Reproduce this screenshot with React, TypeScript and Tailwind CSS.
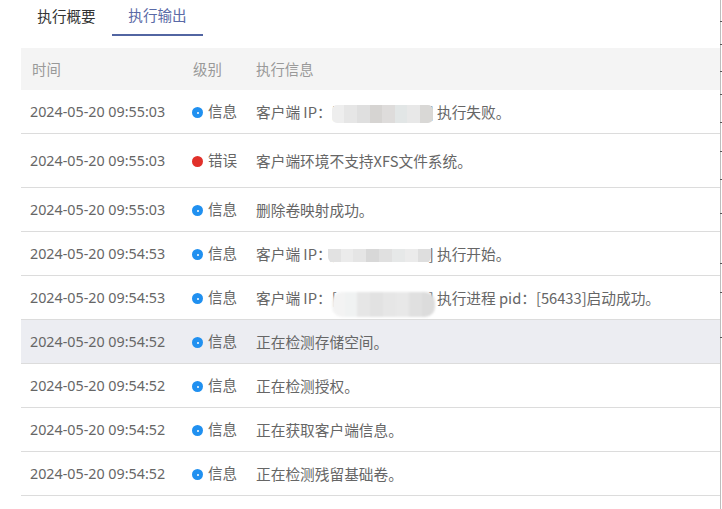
const font = "[font-family:'Noto_Sans_CJK_SC','Noto_Sans',sans-serif]";

const mosaic: Record<string, string[]> = {
  a: ["#eeeeee", "#e6e6e6", "#dfdfdf", "#d6d4d2", "#dedcdb", "#e2e6e6", "#e8e8e8", "#d9d8d6"],
  b: ["#e2e2e2", "#ebebeb", "#e5e5e5", "#d8d8d8", "#e0e0e0", "#e6e8e8", "#ebebeb", "#dedede"],
  c: ["#f3f3f3", "#f0f2f2", "#e6e6e6", "#e2e2e2", "#e6e6e6", "#e8e8e8", "#e0e0e0", "#dcdcdc"],
};

function Masked({ kind }: { kind: "a" | "b" | "c" }) {
  return (
    <span className="relative inline-block w-[102px] whitespace-nowrap text-right">
      <span className="absolute left-0">[</span>]
      {kind === "a" && (
        <span className="absolute left-0 top-[3px] flex h-[18px] w-[101px] overflow-hidden rounded-[5px] blur-[0.6px]">
          {mosaic.a.map((c, i) => (
            <span key={i} className="h-full flex-1" style={{ backgroundColor: c }} />
          ))}
        </span>
      )}
      {kind === "b" && (
        <span className="absolute -left-[4px] -top-[1px] h-[20px] w-[103px] overflow-hidden rounded-[6px] bg-white blur-[0.6px]">
          <span className="mt-[6px] flex h-[13px]">
            {mosaic.b.map((c, i) => (
              <span key={i} className="h-full flex-1" style={{ backgroundColor: c }} />
            ))}
          </span>
        </span>
      )}
      {kind === "c" && (
        <span className="absolute left-0 top-[4px] flex h-[25px] w-[103px] overflow-hidden rounded-[10px] blur-[0.8px]">
          {mosaic.c.map((c, i) => (
            <span key={i} className="h-full flex-1" style={{ backgroundColor: c }} />
          ))}
        </span>
      )}
    </span>
  );
}

type Row = { time: string; level?: "err"; h: string; active?: boolean; msg: React.ReactNode };

const rows: Row[] = [
  { time: "2024-05-20 09:55:03", h: "h-[44px]", msg: <>客户端 IP：<Masked kind="a" /> 执行失败。</> },
  { time: "2024-05-20 09:55:03", level: "err", h: "h-[54px]", msg: "客户端环境不支持XFS文件系统。" },
  { time: "2024-05-20 09:55:03", h: "h-[44px]", msg: "删除卷映射成功。" },
  { time: "2024-05-20 09:54:53", h: "h-[44px]", msg: <>客户端 IP：<Masked kind="b" /> 执行开始。</> },
  { time: "2024-05-20 09:54:53", h: "h-[44px]", msg: <>客户端 IP：<Masked kind="c" /> 执行进程 pid：[56433]启动成功。</> },
  { time: "2024-05-20 09:54:52", h: "h-[44px]", active: true, msg: "正在检测存储空间。" },
  { time: "2024-05-20 09:54:52", h: "h-[44px]", msg: "正在检测授权。" },
  { time: "2024-05-20 09:54:52", h: "h-[44px]", msg: "正在获取客户端信息。" },
  { time: "2024-05-20 09:54:52", h: "h-[44px]", msg: "正在检测残留基础卷。" },
];

const ticks = [22, 23, 27, 23, 28, 29, 28, 34, 50, 29, 45];

export default function App() {
  return (
    <div className={`${font} relative h-[509px] w-[722px] overflow-hidden bg-white text-[14.4px] leading-[20px] text-[#666]`}>
      <div className="flex h-[36px] pl-[21px]">
        <div className="flex w-[91px] items-center justify-center pb-[4px] text-[14.6px] text-[#333]">执行概要</div>
        <div className="flex h-[36px] w-[91px] items-center justify-center border-b-2 border-[#5265a2] pb-[4px] text-[14.6px] text-[#5a6aa6]">执行输出</div>
      </div>
      <div className="ml-[21px] mt-[12px] w-[699px]">
        <div className="flex h-[42px] items-center bg-[#f4f4f4] text-[#999]">
          <div className="w-[172px] pl-[11px]">时间</div>
          <div className="w-[63px]">级别</div>
          <div>执行信息</div>
        </div>
        {rows.map((r, i) => (
          <div key={i} className={`flex ${r.h} items-center border-b border-[#dcdcdc] ${r.active ? "bg-[#ecedf2]" : ""}`}>
            <div className="w-[171px] whitespace-nowrap pl-[9px] text-[14.3px] font-['Noto_Sans',sans-serif]">{r.time}</div>
            <div className="flex w-[64px] items-center gap-[5px]">
              {r.level === "err" ? (
                <span className="h-[11px] w-[11px] translate-y-[1px] rounded-full bg-[#e1302a]" />
              ) : (
                <span className="flex h-[11px] w-[11px] translate-y-[1px] items-center justify-center rounded-full bg-[#2090f0]">
                  <span className="h-[2px] w-[2px] rounded-full bg-white" />
                </span>
              )}
              <span className="-translate-y-px text-[14.6px]">{r.level === "err" ? "错误" : "信息"}</span>
            </div>
            <div className="whitespace-nowrap text-[14.7px]">{r.msg}</div>
          </div>
        ))}
      </div>
      <div className="absolute left-[720px] top-0 h-full w-[1px] bg-[#bdbdbd]" />
      <div className="absolute left-[720px] top-0 flex w-[2px] flex-col">
        {ticks.map((t, i) => (
          <div key={i} className="w-[2px] border-b border-[#555]" style={{ height: t }} />
        ))}
      </div>
    </div>
  );
}
